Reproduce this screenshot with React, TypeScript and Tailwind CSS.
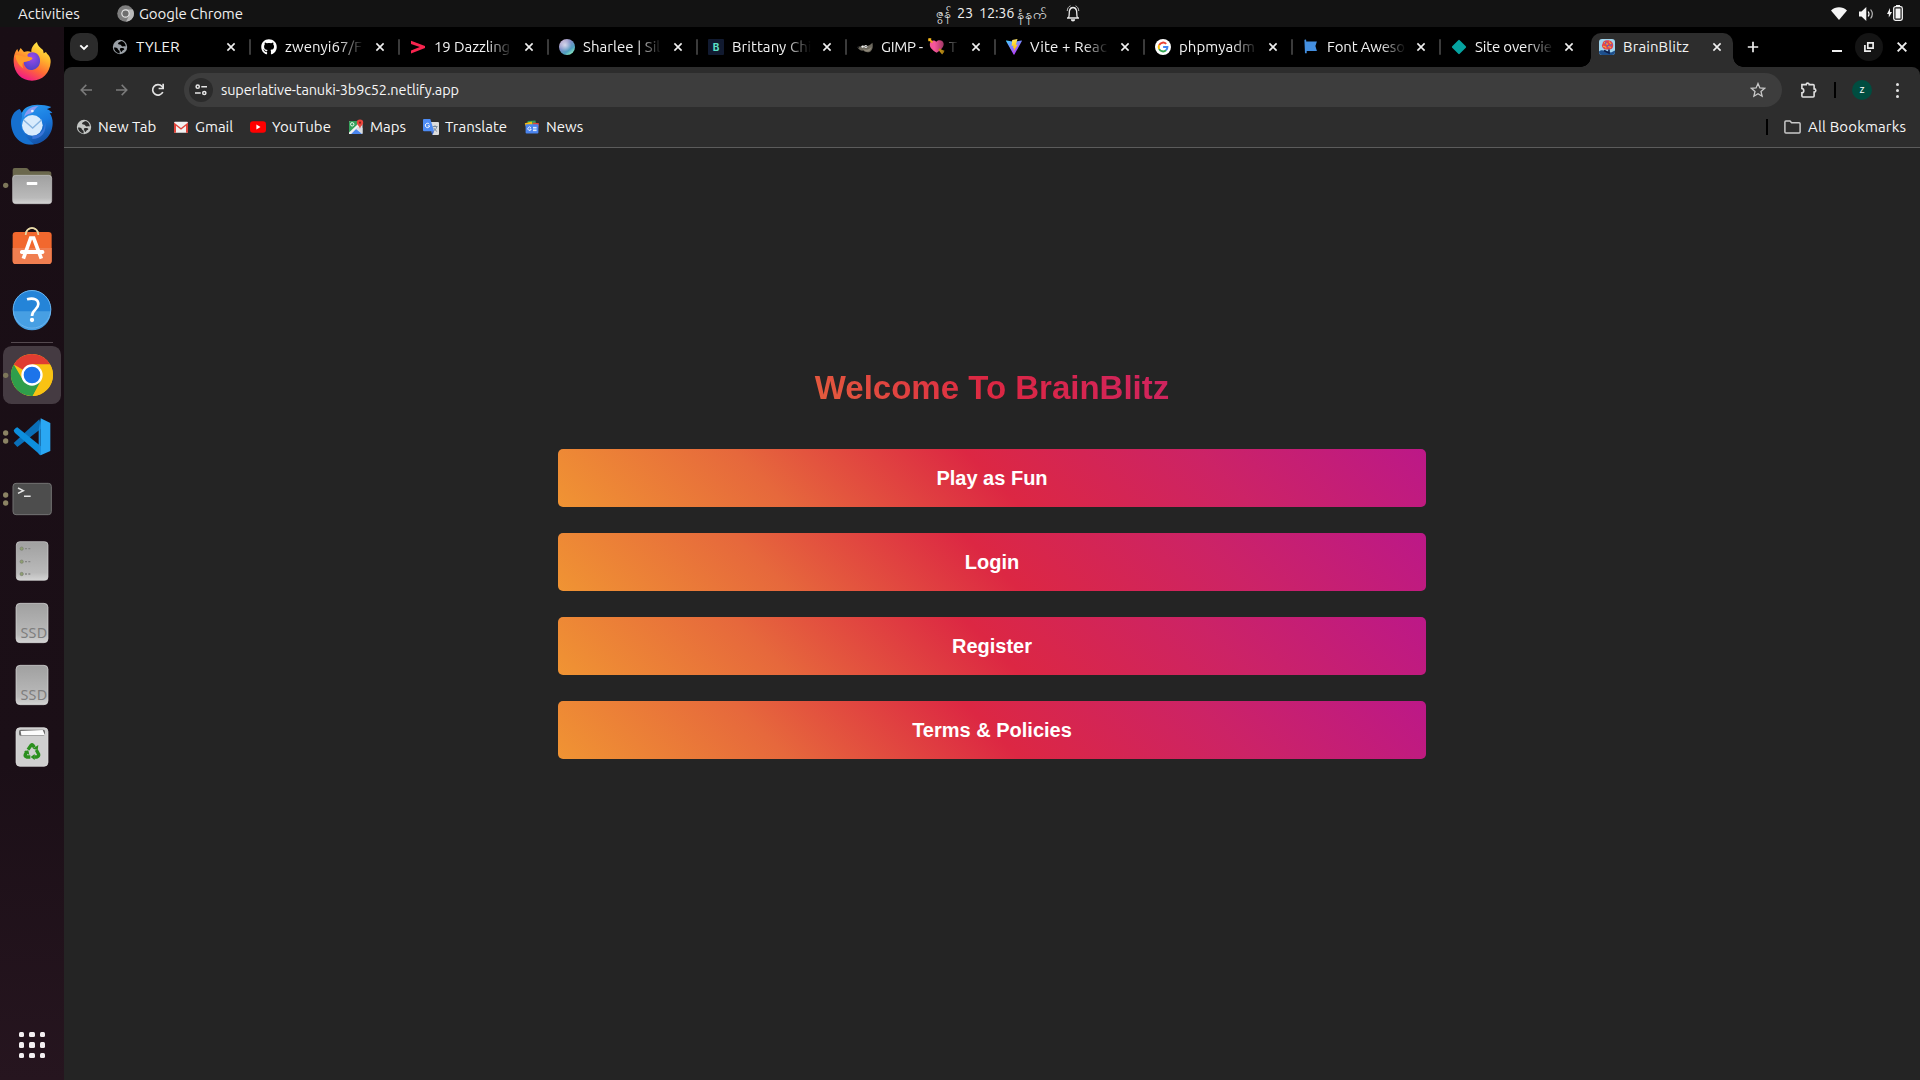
import React from "react";
import { FaGithub } from "react-icons/fa";

type Kids = { children: React.ReactNode };

/* ---------- small icons ---------- */

const Ico = ({ children, s = 16, vb = "0 0 16 16" }: Kids & { s?: number; vb?: string }) => (
  <svg width={s} height={s} viewBox={vb} className="block shrink-0">
    {children}
  </svg>
);

const Globe = ({ fill, hole }: { fill: string; hole: string }) => (
  <Ico>
    <circle cx="8" cy="8" r="7.2" fill={fill} />
    <path d="M2 8.600c2.200-.6 3.600.2 3.900 1.600.2 1 1.600.7 1.700 2l.1 2.200C4.700 14.200 2.200 12 2 8.600Z" fill={hole} />
    <path d="M8.900 2c-.4 1.200-2.400 1-2.800 2.200-.3 1 .9 1.300 1.700 1.300 1.300 0 1.200 1.700 2.700 1.900 1.300.2 2-.6 3.300.2-.1-3-2-5.200-4.900-5.600Z" fill={hole} />
    <path d="M8.300 9.300c1.700-.6 3.800-.3 4 .7.2 1.200-1.900 1-2.200 2.300-.2.800-1.200.9-1.400 0-.2-1-1.500-2.300-.4-3Z" fill={hole} />
  </Ico>
);

const PinkArrow = () => (
  <Ico>
    <path d="M1 1.800 15 7.100v2L1 14.500v-3.100l8.800-3.300L1 5Z" fill="#f8254f" />
  </Ico>
);

const Orb = () => (
  <Ico>
    <defs>
      <linearGradient id="orb" x1="0" y1="0" x2=".75" y2="1">
        <stop offset="0" stopColor="#d8b4cf" />
        <stop offset=".45" stopColor="#7f8fc8" />
        <stop offset=".75" stopColor="#4f9fc0" />
        <stop offset="1" stopColor="#8ff0c0" />
      </linearGradient>
      <radialGradient id="orb2" cx=".38" cy=".38" r=".4">
        <stop offset="0" stopColor="#fff" stopOpacity=".65" />
        <stop offset="1" stopColor="#fff" stopOpacity="0" />
      </radialGradient>
    </defs>
    <circle cx="8" cy="8" r="8" fill="url(#orb)" />
    <circle cx="8" cy="8" r="8" fill="url(#orb2)" />
  </Ico>
);

const LetterB = () => (
  <span className="flex size-4 shrink-0 items-center justify-center rounded-[1px] bg-[#111a30] font-['Inter',sans-serif] text-[10px] leading-none font-bold text-[#5ce0c6]">B</span>
);

const Gimp = () => (
  <Ico>
    <path d="M.5 8.200C2 6.800 3.200 7.800 4.500 7.200c1-.8 2-1 3.200-.6 2.300 1 4.600.2 7.700-2.900.8 3.500.4 7-1.900 8.700-2.300 1.600-5.600 1-7-.8-2.400.6-4.700-.8-6-3.400Z" fill="#6b675c" />
    <path d="M6 9.500c2 2 6 1.600 8.500-2-.2 3-1.500 4.600-3.500 5-2 .3-4.400-.6-5-3Z" fill="#8d8778" />
    <circle cx="5.600" cy="7.600" r="1.200" fill="#eee" />
    <circle cx="8.800" cy="7.500" r="1.500" fill="#eee" />
    <circle cx="9" cy="7.600" r=".6" fill="#111" />
    <circle cx="1.200" cy="8.300" r=".9" fill="#222" />
  </Ico>
);

const HeartArrow = () => (
  <span className="mr-1 ml-[5px] inline-block align-[-3px]">
    <Ico s={17} vb="0 0 17 17">
      <path d="M8.600 14.800C4 12 1.300 9.500 1.900 5.600 2.400 2.600 6 1.300 8.300 3.800c2.400-2.600 6.700-1.600 7.300 1.500.7 3.600-2.600 6.500-7 9.500Z" fill="#f5559a" />
      <path d="M1 1.200 4.500 4.500M11 11l4 4" stroke="#f0a020" strokeWidth="1.800" />
      <path d="M.3.300h3L3 3 .3 3.300ZM12 11l4.600 1.700-1 1.700-1.500 2-2.800-3.500Z" fill="#f5b81c" />
    </Ico>
  </span>
);

const Vite = () => (
  <Ico>
    <defs>
      <linearGradient id="vt" x1="0" y1="0" x2=".6" y2="1">
        <stop offset="0" stopColor="#41d1ff" />
        <stop offset="1" stopColor="#bd34fe" />
      </linearGradient>
      <linearGradient id="vt2" x1=".4" y1="0" x2=".6" y2="1">
        <stop offset="0" stopColor="#ffea83" />
        <stop offset=".3" stopColor="#ffdd35" />
        <stop offset="1" stopColor="#ffa800" />
      </linearGradient>
    </defs>
    <path d="M15.900 2.100 8.400 15.600a.5.500 0 0 1-.8 0L0 2.100c-.2-.4.100-.7.500-.6l7.500 1.300 7.400-1.300c.4-.1.700.3.500.6Z" fill="url(#vt)" />
    <path d="M11.500 0 6.200 1.100l-.5 5.900 1.800-.4-.6 2.600 1.300-.3-.8 3.800 4.400-7.200-2 .4Z" fill="url(#vt2)" />
  </Ico>
);

const Google = () => (
  <Ico>
    <circle cx="8" cy="8" r="8" fill="#fff" />
    <g fill="none" strokeWidth="2">
      <path d="M4.200 5.900A4.400 4.400 0 0 1 11.200 4.900" stroke="#ea4335" />
      <path d="M4.200 10.100a4.400 4.400 0 0 1 0-4.200" stroke="#fbbc05" />
      <path d="M11 11.300A4.400 4.400 0 0 1 4.200 10.100" stroke="#34a853" />
      <path d="M8.100 8h4.300a4.400 4.400 0 0 1-1.400 3.300" stroke="#4285f4" />
    </g>
  </Ico>
);

const Flag = () => (
  <Ico>
    <path d="M1.400 1.200A.9.900 0 0 1 3.200 1.500V2.500H13.900L12.400 7 13.900 12H3.700V14.200H2Z" fill="#448fe0" />
  </Ico>
);

const Diamond = () => (
  <Ico>
    <rect x="2.700" y="2.700" width="10.600" height="10.600" rx="1" transform="rotate(45 8 8)" fill="#05a3a0" />
  </Ico>
);

const Brain = () => (
  <Ico>
    <rect width="16" height="16" rx="3" fill="#9fd4ee" />
    <path d="M0 12.500c2-2 4-1 6-1l6 2 4-2V13a3 3 0 0 1-3 3H3a3 3 0 0 1-3-3Z" fill="#1d4f8c" />
    <path d="M3.500 5C3.500 2.500 6 1 8.500 1.300 12 1.300 14.500 3.500 14.200 6.800 14 10 11.500 11 9 10.500c-2 .2-4 0-5-1.500C2.700 7.500 2.600 6 3.500 5Z" fill="#e2444e" />
    <path d="M5 3.500c2 0 2 2 4 1.500M10 2.500l2 2.500M4 7.500c1.500-.5 3 .5 3 2M9 7.500l3 1" stroke="#f4a63c" strokeWidth="1.200" fill="none" />
    <path d="M7 2.500 6.500 5M10 6l-2 1.500M13 5.500l-1.500 1" stroke="#5c62c9" strokeWidth="1.100" />
    <path d="M10 10.500v3.500l-3-1.500-2-1" stroke="#0b1c4a" strokeWidth="1.600" fill="none" />
  </Ico>
);

const Gmail = () => (
  <Ico>
    <rect x="1" y="2.800" width="14" height="11" rx="1" fill="#f1f1f1" />
    <path d="M1 13.800V3.600L8 9l7-5.400v10.200h-2V6.800L8 10.800 3 6.800v7Z" fill="#e0443a" />
  </Ico>
);

const Youtube = () => (
  <Ico>
    <rect x="0" y="2.300" width="16" height="11.400" rx="3" fill="#f00" />
    <path d="M6.400 5.600v4.800L10.500 8Z" fill="#fff" />
  </Ico>
);

const Maps = () => (
  <Ico>
    <rect x="1" y="2" width="13.500" height="13" rx="1" fill="#dfe3e8" />
    <path d="M1 3a1 1 0 0 1 1-1h7.500v6L2 15H1Z" fill="#35a05a" />
    <path d="m3 15 5-5 6 5Z" fill="#4a86f0" />
    <path d="m1 13.500 9-8.500 1.300 1.600L2.800 15H1Z" fill="#f2f2f2" />
    <path d="m9 9.500 5.500 5.500v-6l-3-2Z" fill="#d9dde2" />
    <circle cx="4.200" cy="5.300" r="1.700" fill="none" stroke="#fff" strokeWidth=".9" />
    <path d="M12 .5a3.200 3.200 0 0 1 3.200 3.300c0 2-2.500 3-3.200 6-.7-3-3.200-4-3.200-6A3.200 3.200 0 0 1 12 .5Z" fill="#e8453c" />
    <circle cx="12" cy="3.700" r="1.100" fill="#8d211b" />
  </Ico>
);

const Translate = () => (
  <Ico>
    <path d="M6 3h9a1 1 0 0 1 1 1v11a1 1 0 0 1-1 1H9.500Z" fill="#dcdcdc" />
    <path d="M9.500 7.500h5M12 6.300v1.200M13.800 7.800c-.5 2-2 3.500-3.300 4.200M10.800 8.800c.6 1.700 2 3 3.300 3.600" stroke="#6f8398" strokeWidth=".9" fill="none" />
    <path d="M1 0h6.300l3.800 12.300H1a1 1 0 0 1-1-1V1a1 1 0 0 1 1-1Z" fill="#4d8cf5" />
    <path d="M8 12.300h3.100L9.500 16Z" fill="#3562c4" />
    <path d="M6.300 5.100A2.200 2.200 0 1 0 6.700 6.900H4.800" stroke="#fff" strokeWidth="1" fill="none" />
  </Ico>
);

const News = () => (
  <Ico>
    <path d="m3.500 2 8-.6.5 4h-8Z" fill="#2f9e55" />
    <path d="m.8 4.200 7-1.800 1 4-7 1Z" fill="#f8bd12" />
    <path d="m9 3.500 6 .8-.8 5L9 8Z" fill="#e2453b" />
    <rect x="1.600" y="5.200" width="12.800" height="9.200" rx="1" fill="#4a84ee" />
    <path d="M7 8.800A1.700 1.700 0 1 0 7.200 10.100H5.600M9 8.400h3.600M9 10h3.600M9 11.600h3.600" stroke="#fff" strokeWidth=".9" fill="none" />
  </Ico>
);

const Cross = ({ s = 10 }: { s?: number }) => (
  <svg width={s} height={s} viewBox="0 0 10 10" className="block shrink-0">
    <path d="m1.400 1.400 7.200 7.200M8.600 1.400 1.400 8.600" stroke="#f0f0f0" strokeWidth="1.600" />
  </svg>
);

/* ---------- top bar ---------- */

const TopBar = () => (
  <header className="flex h-[27px] shrink-0 items-center bg-[#131313] text-[15px] leading-none text-[#efefef]">
    <span className="ml-[18px] w-[99px] pb-px tracking-[0.020px]">Activities</span>
    <Ico s={17}>
      <circle cx="8" cy="8" r="7.800" fill="#7e7e7e" />
      <path d="M8 4.200h7A7.800 7.800 0 0 1 8.500 15.800L11.300 10Z" fill="#b9b9b9" />
      <circle cx="8" cy="8" r="4" fill="#e4e4e4" />
      <circle cx="8" cy="8" r="2.900" fill="#6e6e6e" />
    </Ico>
    <span className="ml-[5px] w-[797px] pb-px tracking-[-0.100px]">Google Chrome</span>
    <div className="flex w-[130px] items-center whitespace-pre">
      <span className="w-[21px] text-[13.500px]">ဇွန်</span>
      <span className="w-[22px] text-[14.500px] tracking-[-0.300px]">23</span>
      <span className="w-[38px] text-[14.500px] tracking-[-0.200px]">12:36</span>
      <span className="text-[14px]">နံနက်</span>
    </div>
    <svg width="14" height="17" viewBox="0 0 14 17" className="block shrink-0">
      <path d="M1 13h12M2.600 12.600C3.600 10.500 3 7.500 3.500 5.500 4 3.600 5.300 2.500 7 2.500s3 1.100 3.500 3c.5 2-.1 5 .9 7.100" fill="none" stroke="#e8e8e8" strokeWidth="1.300" />
      <path d="M1.200 6C1.400 3.200 2.600 1.600 4.500.8M12.800 6C12.600 3.200 11.400 1.600 9.500.8" fill="none" stroke="#bdbdbd" strokeWidth="1" />
      <path d="M4.800 14.200h4.400a2.200 2.200 0 0 1-4.400 0Z" fill="#e8e8e8" />
    </svg>
    <div className="ml-auto flex items-center pr-[17px]">
      <svg width="16" height="13" viewBox="0 0 16 13" className="mr-3 block">
        <path d="M0 3.500C4.500-.8 11.500-.8 16 3.500L8 13Z" fill="#f4f4f4" />
      </svg>
      <svg width="16" height="14" viewBox="0 0 16 14" className="mr-3 block">
        <path d="M0 4.500h2.500L7.300 0v14L2.500 9.500H0Z" fill="#f4f4f4" />
        <path d="M9.200 4.500c1 1.500 1 3.500 0 5" stroke="#f4f4f4" strokeWidth="1.200" fill="none" />
        <path d="M11.600 2.500c2 2.600 2 6.400 0 9" stroke="#b8b8b8" strokeWidth="1.200" fill="none" />
      </svg>
      <svg width="16" height="16" viewBox="0 0 16 16" className="mb-px block">
        <path d="M3 3v4h2L1.800 12.500V9H0Z" fill="#f4f4f4" />
        <rect x="6.700" y="1.700" width="8.600" height="13.600" rx="1.800" fill="none" stroke="#f4f4f4" strokeWidth="1.300" />
        <path d="M9 0h4v2H9ZM8.500 3.500h5v10h-5Z" fill="#f4f4f4" />
      </svg>
    </div>
  </header>
);

/* ---------- dock ---------- */

const Cell = ({ y, children, dots = 0, active = false }: { y: number; children: React.ReactNode; dots?: number; active?: boolean }) => (
  <svg width="64" height="62" viewBox={`0 ${y} 192 186`} className="block shrink-0">
    {active && <rect x="9" y={y + 6} width="174" height="174" rx="26" fill="#453b42" />}
    {dots === 1 && <circle cx="17" cy={y + 94} r="8" fill="#7d775a" />}
    {dots === 2 && (
      <>
        <circle cx="17" cy={y + 81} r="8" fill="#8c8464" />
        <circle cx="17" cy={y + 105} r="8" fill="#8c8464" />
      </>
    )}
    {children}
  </svg>
);

const Ssd = ({ y }: { y: number }) => (
  <Cell y={y}>
    <rect x="48" y={y + 34} width="96" height="118" rx="12" fill="url(#metal)" stroke="#dcdcdc" strokeWidth="2" />
    <text x="101.500" y={y + 137} textAnchor="middle" fontSize="43" fontFamily="Noto Sans, sans-serif" textLength="80" fill="#7e7e7e">SSD</text>
  </Cell>
);

const Dock = () => (
  <nav className="flex w-16 shrink-0 flex-col bg-linear-to-b from-[#190e15] via-[#1b0f17] via-70% to-[#26151f] pt-[3px]">
    <Cell y={30}>
      <defs>
        <linearGradient id="ff" x1=".8" y1="0" x2=".3" y2="1">
          <stop offset="0" stopColor="#fff24a" />
          <stop offset=".35" stopColor="#ffb52c" />
          <stop offset=".65" stopColor="#ff6a35" />
          <stop offset="1" stopColor="#f0148c" />
        </linearGradient>
        <radialGradient id="ffc" cx=".5" cy=".3" r=".7">
          <stop offset="0" stopColor="#9b4bea" />
          <stop offset="1" stopColor="#4f41c8" />
        </radialGradient>
        <linearGradient id="metal" x1="0" y1="0" x2="0" y2="1">
          <stop offset="0" stopColor="#a0a0a0" />
          <stop offset=".8" stopColor="#bababa" />
          <stop offset="1" stopColor="#d4d4d4" />
        </linearGradient>
        <linearGradient id="tb" x1="0" y1="0" x2=".4" y2="1">
          <stop offset="0" stopColor="#2da0f2" />
          <stop offset=".6" stopColor="#1a7be0" />
          <stop offset="1" stopColor="#1455ac" />
        </linearGradient>
      </defs>
      <path d="M41 126C40 109 45 95 52 87l3 9 7-12 10 12c9-3 16-2 22 0-1-12 6-22 17-30 2 12 9 16 18 24 1 4 2 7 2 10l7-4c4 8 15 13 14 30-2 33-25 56-56 56s-54-23-55-56Z" fill="url(#ff)" />
      <path d="M96 97c14-1 26 12 24 29s-16 24-27 24-21-10-22-24c8 0 16-2 25-9-7 0-13-4-14-12 3-5 8-8 14-8Z" fill="url(#ffc)" />
      <path d="M46 105c14-1 21 5 32 5 9 0 18 1 20 5-8 10-17 8-24 10-8 3-8 12-3 21-13-8-24-24-25-41Z" fill="#ff9b2a" />
    </Cell>
    <Cell y={216}>
      <path d="M56 300c0-12 5-20 11-24 5-13 24-22 45-22 16 0 29 2 42 7-5 4-9 5-14 6 8 3 13 7 17 12l-8 1c6 8 9 18 9 29 0 36-27 64-62 64s-50-28-40-73Z" fill="url(#tb)" />
      <path d="M33 305c0-14 10-34 26-38 8 10 10 22 3 40 0 22 12 44 40 66-38 6-69-24-69-68Z" fill="#1670cf" />
      <path d="M72 292c4-21 20-34 44-34-14 8-12 20-27 23-7 2-12 5-17 11Z" fill="#8b9cf2" />
      <circle cx="97" cy="273" r="4" fill="#e8f2ff" />
      <circle cx="97" cy="316" r="31" fill="#d9ebfc" />
      <path d="M70 299l28 25 27-25" fill="none" stroke="#86b3e0" strokeWidth="4" />
      <path d="M97 347c22 0 38-14 38-42 7 30-11 52-38 52Z" fill="#4d7fe6" opacity=".65" />
    </Cell>
    <Cell y={402} dots={1}>
      <path d="M38 450q0-6 6-6h34q4 0 7 4l5 6h56q8 0 8 7v20H38Z" fill="#6b684d" />
      <rect x="38" y="466" width="117" height="85" rx="9" fill="url(#metal)" stroke="#c9c9c9" strokeWidth="2" />
      <rect x="80" y="486" width="32" height="9" rx="2" fill="#fff" />
    </Cell>
    <Cell y={18}>
      <path d="M77 75C77 47 115 47 115 75" fill="none" stroke="#e8d9a8" strokeWidth="5" />
      <rect x="38" y="66" width="117" height="96" rx="10" fill="#f2682e" />
      <path d="M38 114h117v38q0 10-10 10H48q-10 0-10-10Z" fill="#f07e50" />
      <path d="M77 75C77 47 115 47 115 75" fill="none" stroke="#e8d9a8" strokeWidth="5" />
      <path d="M70 146 92 84h9l23 62" fill="none" stroke="#fff" strokeWidth="11" />
      <rect x="60" y="120" width="73" height="12" rx="5" fill="#fff" />
    </Cell>
    <Cell y={206}>
      <circle cx="96" cy="300" r="57" fill="#2484d8" />
      <path d="M39 306h114a57 57 0 0 1-114 0Z" fill="#479fe3" />
      <circle cx="96" cy="300" r="56.500" fill="none" stroke="#6ab4ee" strokeWidth="3" />
      <path d="M81 270c22-6 34 2 34 14 0 17-19 17-19 36" fill="none" stroke="#fff" strokeWidth="8" />
      <circle cx="96" cy="332" r="6.500" fill="#fff" />
    </Cell>
    <div className="flex h-1 shrink-0 items-center justify-center">
      <div className="h-px w-[42px] bg-[#54494f]" />
    </div>
    <Cell y={402} dots={1} active>
      <circle cx="96" cy="495" r="63" fill="#f9c213" />
      <path d="M96 495 41.400 463.500A63 63 0 0 1 150.600 463.500H96Z" fill="#e03c31" />
      <path d="M41.400 463.500A63 63 0 0 0 98 558L125 512 96 495 69 511Z" fill="#2f9e4b" />
      <path d="M96 463.500h54.600A63 63 0 0 1 98 558l25-47Z" fill="#f9c213" />
      <circle cx="96" cy="495" r="32" fill="#fff" />
      <circle cx="96" cy="495" r="25" fill="#1c74ea" />
    </Cell>
    <Cell y={18} dots={2}>
      <path d="M41 129 118 58l7 27-73 56Z" fill="#0a6fb8" />
      <path d="M52 82q-4 0-11 9 1 5 4 8l77 67 10-20Z" fill="#0d8fdd" />
      <path d="M122 55l29 14v84l-29 13Z" fill="#2aa7f3" />
      <path d="M122 55v111l-6-4V90Z" fill="#1b8fdd" />
    </Cell>
    <Cell y={204} dots={2}>
      <rect x="39" y="250" width="115" height="94" rx="9" fill="#4d4d4d" stroke="#737373" strokeWidth="3" />
      <path d="m54 264 16 8-16 8M72 288.500h20" fill="none" stroke="#e6e6e6" strokeWidth="4.500" />
    </Cell>
    <Cell y={390}>
      <rect x="49" y="425" width="95" height="116" rx="10" fill="url(#metal)" stroke="#d8d8d8" strokeWidth="2" />
      {[446, 485, 522].map((y) => (
        <g key={y}>
          <circle cx="65" cy={y} r="5" fill="#8fa070" stroke="#777c70" strokeWidth="2" />
          <path d={`M75 ${y}h6M85 ${y}h6`} stroke="#858585" strokeWidth="4" />
        </g>
      ))}
    </Cell>
    <Ssd y={6} />
    <Ssd y={192} />
    <Cell y={378}>
      <rect x="48" y="413" width="96" height="116" rx="12" fill="#cfcfcf" stroke="#e2e2e2" strokeWidth="2" />
      <rect x="57" y="419" width="78" height="18" rx="5" fill="#6c6c6c" />
      <path d="m62 423 66-3 7 16H64Z" fill="#fbfbfb" />
      <g fill="none" stroke="#2b8f1e" strokeWidth="10">
        <path d="M84 479l9-13q3-3 6 0l4 6" />
        <path d="M109 480l7 13q1 6-5 8h-8" />
        <path d="M91 501H80q-6-2-4-8l5-9" />
      </g>
      <path d="m98 476 15 4 2-15ZM104 492v18l-12-9ZM72 484l13-3 3 14Z" fill="#2b8f1e" />
    </Cell>
    <div className="mt-auto mb-[22px] grid grid-cols-3 gap-[5px] self-center">
      {[0, 1, 2, 3, 4, 5, 6, 7, 8].map((i) => (
        <i key={i} className="block size-[5.500px] rounded-[1.500px] bg-[#f4f0f2]" />
      ))}
    </div>
  </nav>
);

/* ---------- tabs ---------- */

const tabs: { icon: React.ReactNode; title: React.ReactNode; cls: string }[] = [
  { icon: <Globe fill="#9aa0a6" hole="#000" />, title: "TYLER", cls: "tracking-[0.150px]" },
  { icon: <FaGithub size={16} color="#fff" className="shrink-0" />, title: "zwenyi67/F", cls: "tracking-[0.050px]" },
  { icon: <PinkArrow />, title: "19 Dazzling", cls: "tracking-[-0.100px]" },
  { icon: <Orb />, title: "Sharlee | Sil", cls: "tracking-[0.050px]" },
  { icon: <LetterB />, title: "Brittany Chi", cls: "tracking-[0.050px]" },
  { icon: <Gimp />, title: <>GIMP -<HeartArrow />T</>, cls: "tracking-[-0.300px]" },
  { icon: <Vite />, title: "Vite + Reac", cls: "tracking-[0.150px]" },
  { icon: <Google />, title: "phpmyadm", cls: "tracking-[0.050px]" },
  { icon: <Flag />, title: "Font Aweso", cls: "tracking-[-0.150px]" },
  { icon: <Diamond />, title: "Site overvie", cls: "tracking-[-0.150px]" },
];

const TabStrip = () => (
  <div className="flex h-10 items-center bg-black text-[15px] text-[#f2f2f2]">
    <div className="ml-1.5 flex size-7 shrink-0 items-center justify-center rounded-[10px] bg-[#2b2b2b]">
      <svg width="10" height="7" viewBox="0 0 10 7">
        <path d="m1.300 1.300 3.700 3.700 3.700-3.700" fill="none" stroke="#fff" strokeWidth="1.900" />
      </svg>
    </div>
    <div className="flex w-[1493px] shrink-0 pl-[14px]">
      {tabs.map((t, i) => (
        <div key={i} className={`flex shrink-0 items-center ${i < 7 ? "w-[149px]" : "w-[148px]"}`}>
          {t.icon}
          <div className={`ml-2 h-6 w-[79px] shrink-0 leading-[23px] whitespace-nowrap ${i ? "mask-r-from-68% mask-r-to-100%" : ""} ${t.cls}`}>{t.title}</div>
          <div className={`w-[23px] ${i < 7 ? "ml-[11px]" : "ml-[10px]"}`}>
            <Cross />
          </div>
          {i < 9 && <div className="h-4 w-0.5 rounded-sm bg-[#3b3b3b]" />}
        </div>
      ))}
    </div>
    <div className="relative mt-1.5 flex h-[34px] w-[142px] shrink-0 items-center self-start rounded-t-[10px] bg-[#2d2d2d] pb-[6px] pl-2">
      <i className="absolute bottom-0 -left-2.5 size-2.5 bg-[radial-gradient(circle_at_0_0,#000_9.500px,#2d2d2d_10px)]" />
      <i className="absolute -right-2.5 bottom-0 size-2.5 bg-[radial-gradient(circle_at_100%_0,#000_9.500px,#2d2d2d_10px)]" />
      <Brain />
      <span className="mt-px ml-2 w-[89px] tracking-[0.100px]">BrainBlitz</span>
      <Cross />
    </div>
    <svg width="12" height="12" viewBox="0 0 12 12" className="ml-[14px] shrink-0">
      <path d="M6 .8v10.400M.8 6h10.400" stroke="#eee" strokeWidth="1.700" />
    </svg>
    <div className="ml-auto flex items-center pr-[12px]">
      <div className="mt-[8px] h-0.5 w-2.5 bg-[#eee]" />
      <div className="mr-[13px] ml-[13px] flex size-7 items-center justify-center rounded-full bg-[#141414]">
        <svg width="10" height="10" viewBox="0 0 10 10">
          <path d="M3.800.9h5.300v5.300H3.800ZM.9 3v6.100H7" fill="none" stroke="#eee" strokeWidth="1.700" />
        </svg>
      </div>
      <Cross s={12} />
    </div>
  </div>
);

/* ---------- toolbar ---------- */

const Arrow = ({ flip = false }: { flip?: boolean }) => (
  <svg width="12" height="12" viewBox="0 0 12 12" className={flip ? "block rotate-180" : "block"}>
    <path d="M12 6H1.500M6.300.9 1.200 6l5.100 5.100" fill="none" stroke="#7b7b7b" strokeWidth="1.500" />
  </svg>
);

const Toolbar = () => (
  <div className="flex h-[46px] items-center">
    <div className="ml-4 flex items-center gap-6">
      <Arrow />
      <Arrow flip />
      <svg width="14" height="14" viewBox="0 0 14 14" className="-ml-px block">
        <path d="M11.800 9A5.300 5.300 0 1 1 10.900 3.300L12.500 5" fill="none" stroke="#e2e2e2" strokeWidth="1.700" />
        <path d="M13 .8v5.400H7.600V4.700h3.700V.8Z" fill="#e2e2e2" />
      </svg>
    </div>
    <div className="ml-[19px] flex h-[34px] w-[1598px] items-center rounded-full bg-[#3d3d3d] pl-[5px]">
      <div className="flex size-6 shrink-0 items-center justify-center rounded-full bg-[#2b2b2b]">
        <svg width="12" height="12" viewBox="0 0 12 12">
          <g fill="none" stroke="#e6e6e6" strokeWidth="1.500">
            <circle cx="2.700" cy="2.700" r="1.600" />
            <path d="M6.300 2.700H12M0 9h5.700" />
            <circle cx="9.300" cy="9" r="1.600" />
          </g>
        </svg>
      </div>
      <span className="ml-2 text-[14.500px] tracking-[-0.120px] text-[#f6f6f6]">superlative-tanuki-3b9c52.netlify.app</span>
      <svg width="16" height="16" viewBox="0 0 16 16" className="mr-4 ml-auto block">
        <path d="m8 1.500 1.900 4.400 4.800.4L11 9.500l1.100 4.700L8 11.700l-4.100 2.500L5 9.500 1.300 6.300l4.800-.4Z" fill="none" stroke="#c9c9c9" strokeWidth="1.300" />
      </svg>
    </div>
    <svg width="18" height="18" viewBox="0 0 18 18" className="ml-[18px] block">
      <path d="M1.900 3.600h4.300c0-2 3-2 3 0h3.900q1 0 1 1v3.300c2.300 0 2.300 3.200 0 3.200v3.900q0 1-1 1H2.900q-1 0-1-1v-3.200c2.500-.2 2.500-4.100 0-4.300Z" fill="none" stroke="#e0e0e0" strokeWidth="1.600" />
    </svg>
    <div className="ml-4 h-4 w-0.5 bg-black" />
    <div className="ml-4 flex size-5 items-center justify-center rounded-full bg-[#004d40] pb-px text-[11px] text-white">z</div>
    <div className="ml-[24px] flex flex-col gap-[3px]">
      <i className="size-[3px] rounded-full bg-[#e2e2e2]" />
      <i className="size-[3px] rounded-full bg-[#e2e2e2]" />
      <i className="size-[3px] rounded-full bg-[#e2e2e2]" />
    </div>
  </div>
);

const bookmarks = [
  { icon: <Globe fill="#c4c7c5" hole="#2d2d2d" />, label: "New Tab", w: "w-[97px]" },
  { icon: <Gmail />, label: "Gmail", w: "w-[77px]" },
  { icon: <Youtube />, label: "YouTube", w: "w-[98px]" },
  { icon: <Maps />, label: "Maps", w: "w-[75px]" },
  { icon: <Translate />, label: "Translate", w: "w-[101px]" },
  { icon: <News />, label: "News", w: "w-[70px]" },
];

const Bookmarks = () => (
  <div className="flex h-[35px] items-center border-b border-[#5c5c5c] pb-[6px] pl-3 text-[15px] text-[#f6f6f6]">
    {bookmarks.map((b) => (
      <div key={b.label} className={`flex items-center gap-1.5 ${b.w}`}>
        {b.icon}
        <span className="whitespace-nowrap">{b.label}</span>
      </div>
    ))}
    <div className="mr-[16px] ml-auto h-4 w-0.5 bg-black" />
    <svg width="17" height="14" viewBox="0 0 17 14" className="block">
      <path d="M.9 12V2Q.9 1 1.900 1H6l1.600 1.800h7.500q1 0 1 1V12q0 1-1 1H1.900q-1 0-1-1Z" fill="none" stroke="#c9c9c9" strokeWidth="1.500" />
    </svg>
    <span className="mr-[14px] ml-[7px] w-[98px] tracking-[0.150px] whitespace-nowrap">All Bookmarks</span>
  </div>
);

/* ---------- page ---------- */

const Page = () => (
  <main className="flex flex-1 flex-col items-center bg-[#242424] font-['Liberation_Sans',sans-serif] font-bold">
    <div className="mt-[219px] flex w-[868px] flex-col gap-[26px] text-center">
      <h1 className="mb-[15px] h-[41px] bg-[linear-gradient(45deg,#f09433_0%,#e6683c_25%,#dc2743_50%,#cc2366_75%,#bc1888_100%)] bg-clip-text text-[33px] leading-[41px] text-transparent">
        Welcome To BrainBlitz
      </h1>
      {["Play as Fun", "Login", "Register", "Terms & Policies"].map((t) => (
        <button
          key={t}
          className="h-[58px] rounded-[5px] bg-[linear-gradient(45deg,#f09433_0%,#e6683c_25%,#dc2743_50%,#cc2366_75%,#bc1888_100%)] text-[20px] text-white"
        >
          {t}
        </button>
      ))}
    </div>
  </main>
);

export default function App() {
  return (
    <div className="flex h-[1080px] w-[1920px] flex-col overflow-hidden bg-black font-['Ubuntu','Noto_Sans',sans-serif]">
      <TopBar />
      <div className="flex min-h-0 flex-1">
        <Dock />
        <div className="flex flex-1 flex-col">
          <TabStrip />
          <div className="bg-black">
            <div className="rounded-t-[8px] bg-[#2d2d2d]">
              <Toolbar />
              <Bookmarks />
            </div>
          </div>
          <Page />
        </div>
      </div>
    </div>
  );
}
